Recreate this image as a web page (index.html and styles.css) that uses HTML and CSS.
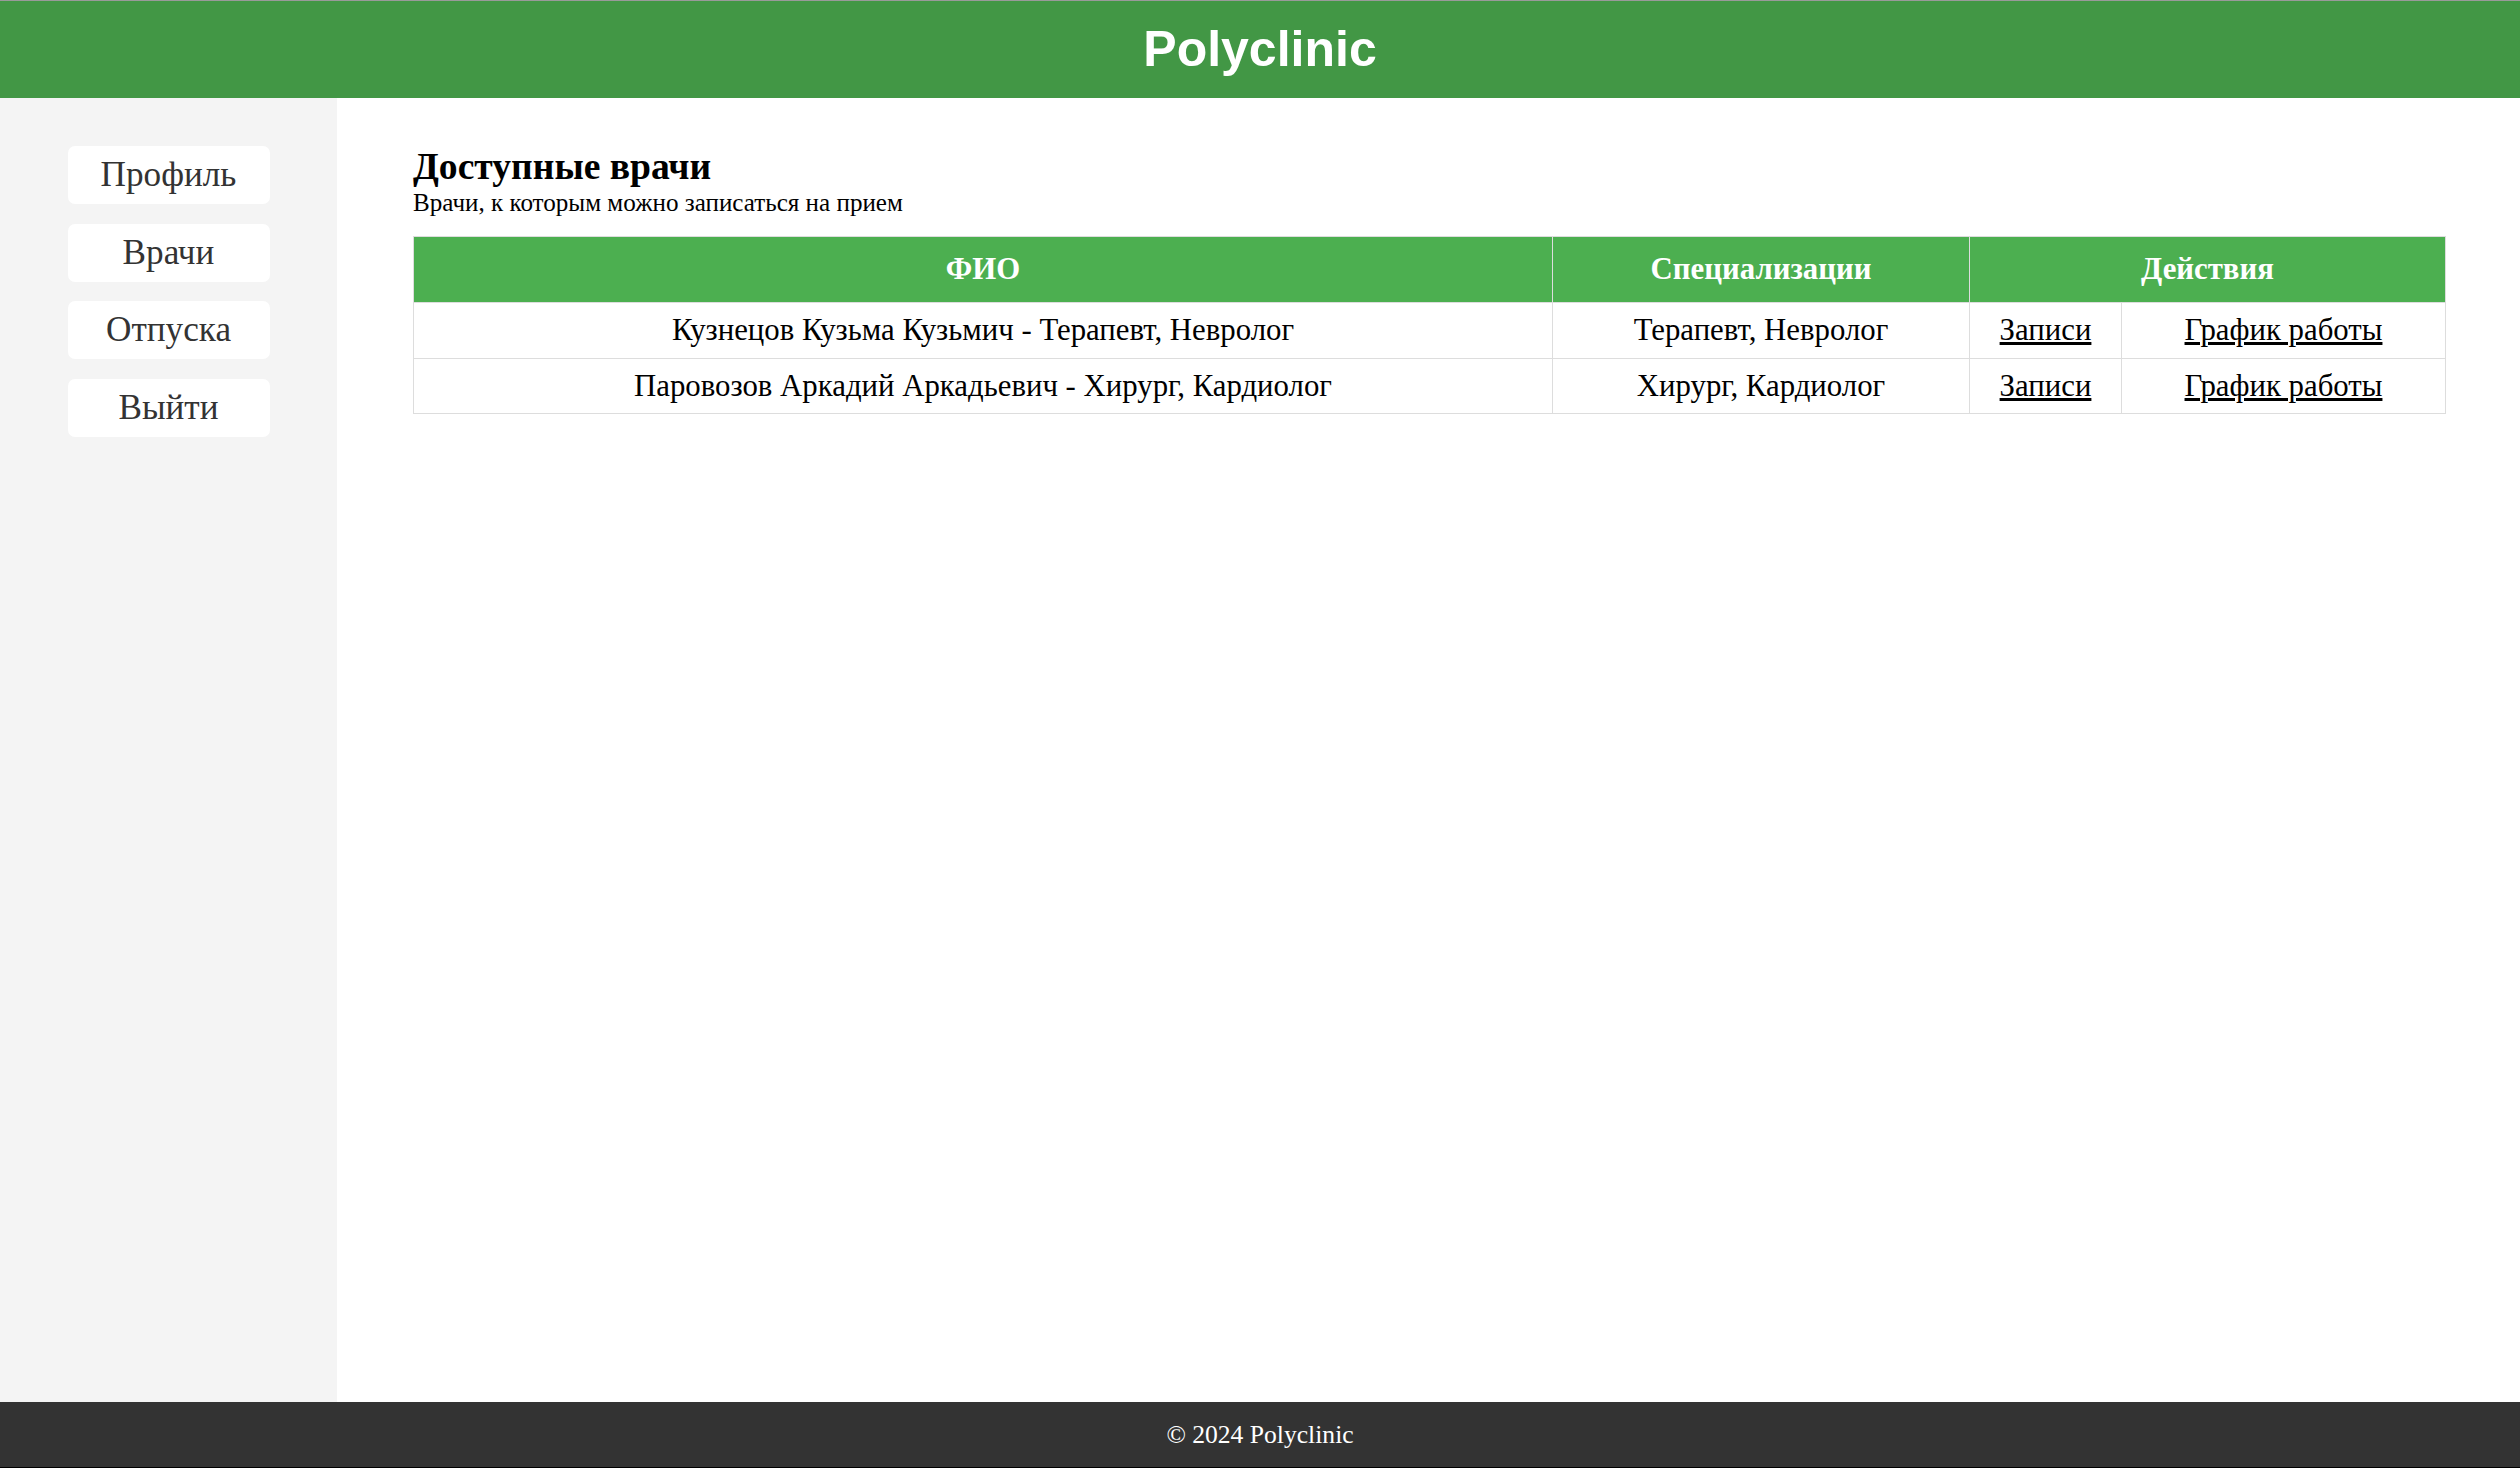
FILE: index.html
```html
<!DOCTYPE html>
<html lang="ru">
<head>
<meta charset="utf-8">
<title>Polyclinic</title>
<link rel="stylesheet" href="styles.css">
</head>
<body>
<header class="site-header">
  <h1 class="site-title">Polyclinic</h1>
</header>
<div class="layout">
  <nav class="sidebar">
    <a class="nav-btn" href="#">Профиль</a>
    <a class="nav-btn" href="#">Врачи</a>
    <a class="nav-btn" href="#">Отпуска</a>
    <a class="nav-btn" href="#">Выйти</a>
  </nav>
  <main class="content">
    <h2 class="page-title">Доступные врачи</h2>
    <p class="page-subtitle">Врачи, к которым можно записаться на прием</p>
    <table class="doctors">
      <colgroup>
        <col class="col-name">
        <col class="col-spec">
        <col class="col-rec">
        <col class="col-sched">
      </colgroup>
      <thead>
        <tr>
          <th>ФИО</th>
          <th>Специализации</th>
          <th colspan="2">Действия</th>
        </tr>
      </thead>
      <tbody>
        <tr>
          <td>Кузнецов Кузьма Кузьмич - Терапевт, Невролог</td>
          <td>Терапевт, Невролог</td>
          <td><a href="#">Записи</a></td>
          <td><a href="#">График работы</a></td>
        </tr>
        <tr>
          <td>Паровозов Аркадий Аркадьевич - Хирург, Кардиолог</td>
          <td>Хирург, Кардиолог</td>
          <td><a href="#">Записи</a></td>
          <td><a href="#">График работы</a></td>
        </tr>
      </tbody>
    </table>
  </main>
</div>
<footer class="site-footer">
  <p class="footer-text">© 2024 Polyclinic</p>
</footer>
</body>
</html>
```

FILE: styles.css
```css
html, body {
  margin: 0;
  padding: 0;
}

body {
  font-family: "Liberation Serif", "Times New Roman", serif;
  color: #000;
  background: #fff;
  min-height: 100vh;
  box-sizing: border-box;
  display: flex;
  flex-direction: column;
  border-top: 1px solid #9a9a9a;
  border-bottom: 1px solid #000;
}

.site-header {
  background: #429745;
  height: 97px;
  display: flex;
  align-items: center;
  justify-content: center;
  flex-shrink: 0;
}

.site-title {
  margin: 0;
  font-family: "Liberation Sans", Arial, sans-serif;
  font-weight: bold;
  font-size: 50px;
  line-height: 57px;
  color: #fff;
}

.layout {
  flex: 1;
  display: flex;
}

.sidebar {
  width: 337px;
  flex-shrink: 0;
  background: #f4f4f4;
  padding-top: 48px;
  display: flex;
  flex-direction: column;
  align-items: center;
  gap: 19.5px;
  box-sizing: border-box;
}

.nav-btn {
  width: 202px;
  height: 58px;
  background: #fff;
  border-radius: 7px;
  display: flex;
  align-items: center;
  justify-content: center;
  color: #333;
  text-decoration: none;
  font-size: 35.2px;
  line-height: 40px;
}

.content {
  flex: 1;
  padding: 47px 75px 0 76px;
  box-sizing: border-box;
}

.page-title {
  margin: 0;
  font-size: 37.6px;
  line-height: 43px;
  font-weight: bold;
}

.page-subtitle {
  margin: 0 0 18px;
  font-size: 25.1px;
  line-height: 30px;
}

.doctors {
  width: 100%;
  border-collapse: collapse;
  table-layout: fixed;
}

.col-name { width: 1139px; }
.col-spec { width: 417px; }
.col-rec { width: 152px; }
.col-sched { width: 324px; }

.doctors th,
.doctors td {
  border: 1px solid #ddd;
  text-align: center;
}

.doctors th {
  background: #4caf50;
  color: #fff;
  font-weight: bold;
  font-size: 30.8px;
  line-height: 35px;
  padding: 15px 9.6px;
}

.doctors td {
  font-size: 30.8px;
  line-height: 35px;
  padding: 10px 9.6px 9.5px;
}

.doctors a {
  color: #000;
  text-decoration: underline;
}

.site-footer {
  background: #333;
  height: 65px;
  flex-shrink: 0;
  display: flex;
  align-items: center;
  justify-content: center;
}

.footer-text {
  margin: 0;
  color: #fff;
  font-size: 25.6px;
  line-height: 29px;
}
```
